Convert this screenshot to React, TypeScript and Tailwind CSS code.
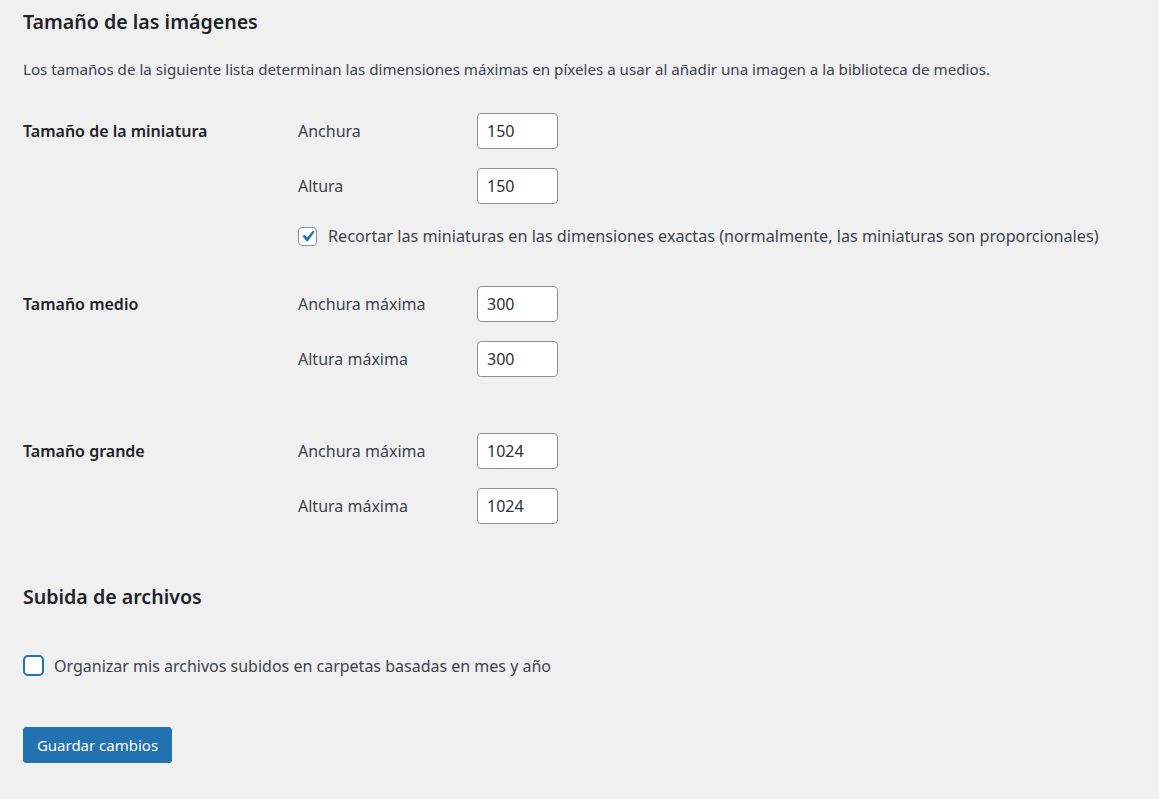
import React from "react";

const font = { fontFamily: '"Noto Sans", "Open Sans", Arial, sans-serif' };

function Field({ label, value }: { label: string; value: string }) {
  return (
    <div className="flex items-center h-[36px]">
      <div className="w-[179px] text-[16px] text-[#3c434a]">{label}</div>
      <div className="w-[81px] h-[36px] bg-white border border-[#8c8f94] rounded-[4px] flex items-center px-[9px] text-[16px] text-[#2c3338]">
        {value}
      </div>
    </div>
  );
}

function Row({ title, children, className = "" }: { title: string; children: React.ReactNode; className?: string }) {
  return (
    <div className={"flex " + className}>
      <div className="w-[275px] h-[36px] flex items-center text-[16px] font-semibold text-[#1d2327]">{title}</div>
      <div className="flex flex-col gap-[19px]">{children}</div>
    </div>
  );
}

export default function App() {
  return (
    <div className="min-h-[799px] w-full bg-[#f0f0f1] pl-[23px] pt-[8px]" style={font}>
      <h2 className="text-[19.6px] font-semibold text-[#1d2327] h-[28px] leading-[28px]">Tamaño de las imágenes</h2>
      <p className="mt-[23px] text-[15.15px] text-[#3c434a] leading-[20px] whitespace-nowrap">
        Los tamaños de la siguiente lista determinan las dimensiones máximas en píxeles a usar al añadir una imagen a la biblioteca de medios.
      </p>
      <Row title="Tamaño de la miniatura" className="mt-[34px]">
        <Field label="Anchura" value="150" />
        <Field label="Altura" value="150" />
        <div className="flex items-center mt-[4px] h-[19px]">
          <div className="w-[19px] h-[19px] bg-white border border-[#8c8f94] rounded-[4px] flex items-center justify-center overflow-visible">
            <svg width="23" height="23" viewBox="0 0 20 20" className="shrink-0 -m-[2px]">
              <path d="M14.83 4.89l1.34.94-5.81 8.38H9.02L5.78 9.67l1.34-1.25 2.57 2.4z" fill="#2271b1" />
            </svg>
          </div>
          <span className="ml-[11px] text-[16.2px] text-[#3c434a] whitespace-nowrap">
            Recortar las miniaturas en las dimensiones exactas (normalmente, las miniaturas son proporcionales)
          </span>
        </div>
      </Row>
      <Row title="Tamaño medio" className="mt-[40px]">
        <Field label="Anchura máxima" value="300" />
        <Field label="Altura máxima" value="300" />
      </Row>
      <Row title="Tamaño grande" className="mt-[56px]">
        <Field label="Anchura máxima" value="1024" />
        <Field label="Altura máxima" value="1024" />
      </Row>
      <h2 className="mt-[59px] text-[19.6px] font-semibold text-[#1d2327] h-[28px] leading-[28px]">Subida de archivos</h2>
      <div className="flex items-center mt-[44px] h-[21px]">
        <div className="w-[21px] h-[21px] bg-white border-2 border-[#2271b1] rounded-[5px]" />
        <span className="ml-[10px] text-[16px] text-[#3c434a]">Organizar mis archivos subidos en carpetas basadas en mes y año</span>
      </div>
      <button className="mt-[51px] w-[149px] h-[36px] bg-[#2271b1] text-white text-[15px] rounded-[3px] border border-[#2271b1]">
        Guardar cambios
      </button>
    </div>
  );
}
